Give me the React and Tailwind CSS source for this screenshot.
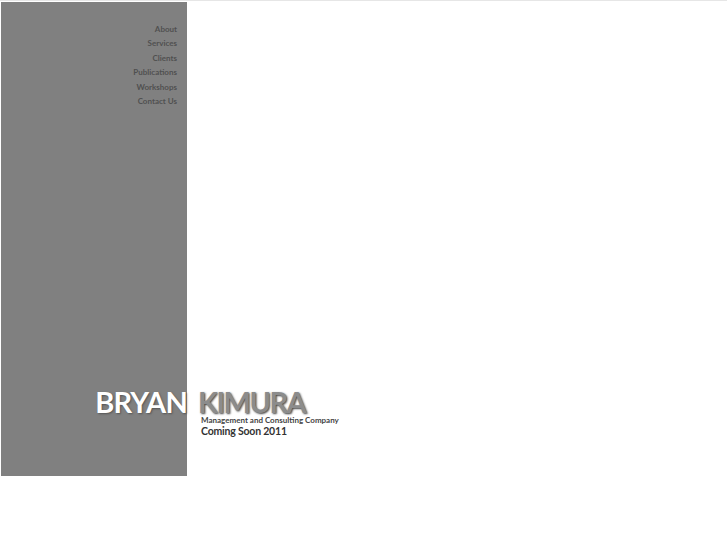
export default function App() {
  const links = ["About", "Services", "Clients", "Publications", "Workshops", "Contact Us"];

  return (
    <div className="min-h-screen bg-white border-t border-[#e6e6e6] font-['Lato','Liberation_Sans',sans-serif]">
      <div className="flex pl-px pt-px">
        {/* grey side panel */}
        <div className="w-[186px] h-[474px] bg-[#808080] flex flex-col">
          <nav className="pt-[20px] pr-[10px] flex flex-col items-end">
            {links.map((l) => (
              <a key={l} href="#" className="text-[8px] leading-[14.4px] font-bold text-[#505050]">
                {l}
              </a>
            ))}
          </nav>
          <div className="mt-auto mb-[60px] text-right text-[29px] leading-[29px] font-bold text-white tracking-[-0.8px] [text-shadow:1px_1px_2px_#555]">
            BRYAN
          </div>
        </div>

        {/* right side */}
        <div className="flex flex-col pl-[11px] pt-[387.5px]">
          <div className="text-[29px] leading-[24px] font-bold text-[#8c8c8c] tracking-[-1.5px] [text-shadow:1px_1px_2px_#444]">
            KIMURA
          </div>
          <div className="mt-[2.5px] pl-[3px] text-[8px] leading-[9px] font-bold text-[#444]">
            Management and Consulting Company
          </div>
          <div className="pl-[3px] text-[10.5px] leading-[12px] font-bold text-[#333] tracking-[-0.2px]">
            Coming Soon 2011
          </div>
        </div>
      </div>
    </div>
  );
}
